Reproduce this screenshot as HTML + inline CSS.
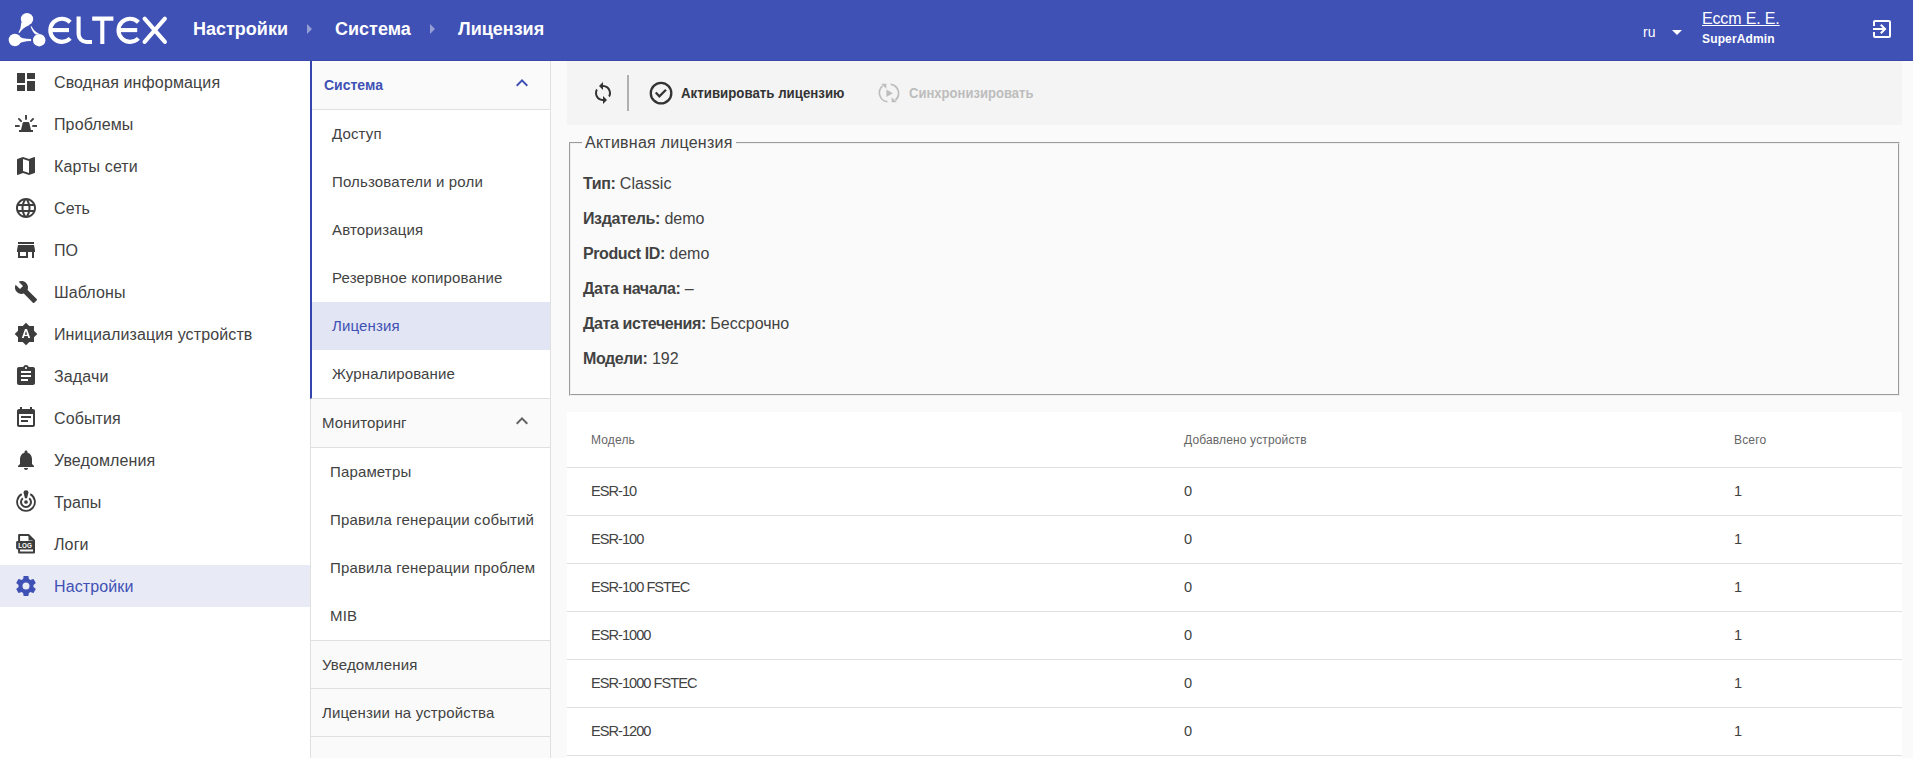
<!DOCTYPE html>
<html><head><meta charset="utf-8">
<style>
*{box-sizing:border-box;margin:0;padding:0}
html,body{width:1913px;height:758px;overflow:hidden;background:#fafafa;font-family:"Liberation Sans",sans-serif;color:#424242}
.abs{position:absolute}
#hdr{position:absolute;left:0;top:0;width:1913px;height:61px;background:#3f51b5;border-bottom:1px solid #3949ab;color:#fff}
.crumb{position:absolute;top:19px;font-size:18px;font-weight:700;line-height:20px;white-space:nowrap;transform-origin:0 0}
.carr{position:absolute;top:23.5px;width:0;height:0;border-top:5px solid transparent;border-bottom:5px solid transparent;border-left:5px solid rgba(255,255,255,.45)}
#nav{position:absolute;left:0;top:61px;width:310px;height:697px;background:#fff}
.ni{position:absolute;left:0;width:310px;height:42px}
.ni svg{position:absolute;left:14px;top:9px;width:24px;height:24px;fill:#3d3d3d}
.ni span{position:absolute;left:54px;top:13px;font-size:16px;line-height:18px;white-space:nowrap;color:#424242;letter-spacing:0.12px}
.ni.sel{background:#e8eaf6}
.ni.sel svg{fill:#3f51b5}
.ni.sel span{color:#3f51b5}
#col2{position:absolute;left:310px;top:61px;width:241px;height:697px;background:#fafafa;border-left:1px solid #e0e0e0;border-right:1px solid #e0e0e0}
#sysp{position:absolute;left:-1px;top:0;width:240px;height:338px;border-left:2px solid #3445ad;border-bottom:1px solid #e0e0e0;background:#fff}
.ph{position:absolute;left:0;width:239px;height:49px;background:#fafafa;border-bottom:1px solid #e0e0e0}
#sysp .ph,#sysp .pi{width:238px}
.ph span{position:absolute;left:11px;top:15px;font-size:15px;line-height:18px;white-space:nowrap;color:#424242;letter-spacing:0.15px}
.ph.sys span{left:12px;font-size:14px;font-weight:700;color:#3f51b5;top:15px;letter-spacing:0}
.chev{position:absolute;left:199px;top:9.5px;width:24px;height:24px;fill:#616161}
.ph.sys .chev{fill:#3f51b5;left:197.7px;top:9.8px}
.pi{position:absolute;left:0;width:239px;height:48px;background:#fff}
.pi span{position:absolute;left:19px;top:15px;font-size:15px;line-height:18px;white-space:nowrap;color:#424242;letter-spacing:0.15px}
#sysp .pi span{left:20px}
.pi.sel{background:#e2e5f3}
.pi.sel span{color:#3f51b5}
#main{position:absolute;left:551px;top:61px;width:1362px;height:697px;background:#fafafa}
#tb{position:absolute;left:16px;top:0;width:1335px;height:64px;background:#f4f4f4}
.tbt{position:absolute;top:22.5px;font-size:15px;line-height:17px;font-weight:700;white-space:nowrap;transform-origin:0 0}
fieldset{position:absolute;left:18px;top:73px;width:1331px;height:262px;padding:0 14px;margin:0}
legend{font-size:16px;padding:0 3px 0 3px;line-height:18px;color:#424242;margin-left:-3px;letter-spacing:0.25px}
.fr{position:absolute;left:12px;font-size:16px;line-height:18px;white-space:nowrap;color:#424242}
.fr b{font-weight:700;letter-spacing:-0.4px}
#tbl{position:absolute;left:16px;top:351px;width:1335px;height:346px;background:#fff}
.th{position:absolute;font-size:12px;line-height:14px;color:#666;white-space:nowrap;top:21px;letter-spacing:0.15px}
.tr{position:absolute;left:0;width:1335px;height:48px;border-top:1px solid #e0e0e0}
.tr span{position:absolute;top:15px;font-size:14.6px;line-height:16px;white-space:nowrap;color:#424242;letter-spacing:-0.98px}
</style></head><body>
<div id="hdr"><svg class="abs" style="left:0;top:0" width="180" height="60" viewBox="0 0 180 60">
<g fill="#fff">
<circle cx="27" cy="19.1" r="6.2"/><circle cx="14.9" cy="40" r="6.2"/><circle cx="39.2" cy="40.2" r="6.2"/>
<path d="M21.3 22.3 Q21.2 28 18.5 32.6 L19.5 33.1 Q22.8 27.8 29.6 25.1 Z"/>
<path d="M18.5 36.2 Q21.5 38.6 31.1 39 L31.1 41.1 Q21.5 41.5 18.5 44 Z"/>
<path d="M35.8 34.6 Q33 33.3 30.6 26.6 L31.6 26.2 Q34 31.5 39.5 33.9 Z"/>
</g>
<g fill="none" stroke="#fff" stroke-width="4.1">
<path d="M70.2 22.2A11.6 11.6 0 1 0 70.2 38.4"/><path d="M51.5 30.1H69"/>
<path d="M78.6 16.6V34A8 8 0 0 0 86.6 42H92"/>
<path d="M92.2 18.6H113.4M102.3 18.6V44"/>
<path d="M138.4 22.2A11.6 11.6 0 1 0 138.4 38.4"/><path d="M119.7 30.1H137.2"/>
<path d="M144.6 18.7L164.9 41.9M164.9 18.7L144.6 41.9" stroke-linecap="round"/>
</g></svg>
<span class="crumb" style="left:193px">Настройки</span><span class="carr" style="left:307px"></span>
<span class="crumb" style="left:335px">Система</span><span class="carr" style="left:430px"></span>
<span class="crumb" style="left:458px">Лицензия</span>
<span class="abs" style="left:1643px;top:23.5px;font-size:14px;line-height:16px">ru</span>
<span class="abs" style="left:1672px;top:30px;width:0;height:0;border-left:5px solid transparent;border-right:5px solid transparent;border-top:5px solid #fff"></span>
<span class="abs" style="left:1702px;top:10px;font-size:16px;line-height:18px;text-decoration:underline;letter-spacing:-0.15px">Eccm E. E.</span>
<span class="abs" style="left:1702px;top:32px;font-size:12px;line-height:14px;font-weight:700;letter-spacing:0.15px">SuperAdmin</span>
<svg class="abs" style="left:1870px;top:17px" width="24" height="24" viewBox="0 0 24 24" fill="#fff"><path d="M19,3H5C3.89,3 3,3.89 3,5V9H5V5H19V19H5V15H3V19A2,2 0 0,0 5,21H19A2,2 0 0,0 21,19V5C21,3.89 20.1,3 19,3M10.08,15.58L11.5,17L16.5,12L11.5,7L10.08,8.41L12.67,11H3V13H12.67L10.08,15.58Z"/></svg>
</div>
<div id="nav"><div class="ni" style="top:0px"><svg viewBox="0 0 24 24"><path d="M3 13h8V3H3v10zm0 8h8v-6H3v6zm10 0h8V11h-8v10zm0-18v6h8V3h-8z"/></svg><span>Сводная информация</span></div><div class="ni" style="top:42px"><svg viewBox="0 0 24 24"><rect x="5" y="18" width="14" height="2"/><path d="M7 18L8.6 11.2Q8.9 10 10.1 10H13.9Q15.1 10 15.4 11.2L17 18Z"/><rect x="11.05" y="3" width="1.9" height="4.7"/><rect x="1" y="13.05" width="4.7" height="1.9"/><rect x="18.3" y="13.05" width="4.7" height="1.9"/><path d="M4.9 6.9L7.1 9.1M19.1 6.9L16.9 9.1" stroke="#3d3d3d" stroke-width="1.9" stroke-linecap="round"/></svg><span>Проблемы</span></div><div class="ni" style="top:84px"><svg viewBox="0 0 24 24"><path d="M20.5 3l-.16.03L15 5.1 9 3 3.36 4.9c-.21.07-.36.25-.36.48V20.5c0 .28.22.5.5.5l.16-.03L9 18.9l6 2.1 5.64-1.9c.21-.07.36-.25.36-.48V3.5c0-.28-.22-.5-.5-.5zM15 19l-6-2.11V5l6 2.11V19z"/></svg><span>Карты сети</span></div><div class="ni" style="top:126px"><svg viewBox="0 0 24 24"><path d="M11.99 2C6.47 2 2 6.48 2 12s4.47 10 9.99 10C17.52 22 22 17.52 22 12S17.52 2 11.99 2zm6.93 6h-2.95c-.32-1.25-.78-2.450-1.38-3.56 1.84.63 3.37 1.91 4.33 3.56zM12 4.04c.83 1.2 1.48 2.53 1.91 3.96h-3.82c.43-1.43 1.08-2.76 1.910-3.96zM4.26 14C4.1 13.36 4 12.69 4 12s.1-1.36.26-2h3.38c-.08.66-.14 1.32-.14 2 0 .68.06 1.34.14 2H4.26zm.82 2h2.95c.32 1.25.78 2.45 1.38 3.56-1.84-.63-3.37-1.9-4.33-3.56zm2.95-8H5.08c.96-1.66 2.49-2.93 4.33-3.56C8.81 5.55 8.35 6.75 8.03 8zM12 19.96c-.83-1.2-1.48-2.53-1.91-3.96h3.82c-.43 1.43-1.08 2.76-1.91 3.96zM14.34 14H9.66c-.09-.66-.16-1.32-.16-2 0-.68.07-1.35.16-2h4.68c.09.65.16 1.32.16 2 0 .68-.07 1.34-.16 2zm.25 5.56c.6-1.11 1.06-2.31 1.38-3.56h2.95c-.96 1.65-2.49 2.93-4.33 3.56zM16.36 14c.08-.66.14-1.32.14-2 0-.68-.06-1.34-.14-2h3.38c.16.64.26 1.31.26 2s-.1 1.36-.26 2h-3.38z"/></svg><span>Сеть</span></div><div class="ni" style="top:168px"><svg viewBox="0 0 24 24"><path d="M20 4H4v2h16V4zm1 10v-2l-1-5H4l-1 5v2h1v6h10v-6h4v6h2v-6h1zm-9 4H6v-4h6v4z"/></svg><span>ПО</span></div><div class="ni" style="top:210px"><svg viewBox="0 0 24 24"><path d="M22.7 19l-9.1-9.1c.9-2.3.4-5-1.5-6.9-2-2-5-2.4-7.4-1.3L9 6 6 9 1.6 4.7C.4 7.1.9 10.1 2.9 12.1c1.9 1.9 4.6 2.4 6.9 1.5l9.1 9.1c.4.4 1 .4 1.4 0l2.3-2.3c.5-.4.5-1.1.1-1.4z"/></svg><span>Шаблоны</span></div><div class="ni" style="top:252px"><svg viewBox="0 0 24 24"><path d="M10.85 12.65h2.3L12 9l-1.15 3.65zM20 8.69V4h-4.69L12 .69 8.69 4H4v4.69L.69 12 4 15.31V20h4.69L12 23.31 15.31 20H20v-4.69L23.31 12 20 8.69zM14.3 16l-.7-2h-3.2l-.7 2H7.8L11 7h2l3.2 9h-1.9z"/></svg><span>Инициализация устройств</span></div><div class="ni" style="top:294px"><svg viewBox="0 0 24 24"><path d="M19 3h-4.18C14.4 1.840 13.3 1 12 1c-1.3 0-2.4.84-2.82 2H5c-1.1 0-2 .9-2 2v14c0 1.1.9 2 2 2h14c1.1 0 2-.9 2-2V5c0-1.1-.9-2-2-2zm-7 0c.55 0 1 .45 1 1s-.45 1-1 1-1-.45-1-1 .45-1 1-1zm2 14H7v-2h7v2zm3-4H7v-2h10v2zm0-4H7V7h10v2z"/></svg><span>Задачи</span></div><div class="ni" style="top:336px"><svg viewBox="0 0 24 24"><path d="M17 10H7v2h10v-2zm2-7h-1V1h-2v2H8V1H6v2H5c-1.11 0-1.99.9-1.99 2L3 19c0 1.1.89 2 2 2h14c1.1 0 2-.9 2-2V5c0-1.1-.9-2-2-2zm0 16H5V8h14v11zm-5-5H7v2h7v-2z"/></svg><span>События</span></div><div class="ni" style="top:378px"><svg viewBox="0 0 24 24"><path d="M12 22c1.1 0 2-.9 2-2h-4c0 1.1.89 2 2 2zm6-6v-5c0-3.07-1.64-5.64-4.5-6.32V4c0-.83-.67-1.5-1.5-1.5s-1.5.67-1.5 1.5v.68C7.63 5.36 6 7.92 6 11v5l-2 2v1h16v-1l-2-2z"/></svg><span>Уведомления</span></div><div class="ni" style="top:420px"><svg viewBox="0 0 24 24"><g fill="none" stroke="#3d3d3d"><path d="M16.25 4.18A8.9 8.9 0 1 1 7.75 4.18" stroke-width="1.85"/><path d="M15.21 8.17A5 5 0 1 1 8.79 8.17" stroke-width="2"/></g><circle cx="12" cy="12" r="1.85"/><path d="M9.5 2.5Q9.5 0.2 12 0.2Q14.5 0.2 14.5 2.5L13.1 8Q12 8.9 10.9 8Z"/></svg><span>Трапы</span></div><div class="ni" style="top:462px"><svg viewBox="0 0 24 24"><path d="M5.1 3H14.5L20 8.5V20.6H5.1Z" fill="none" stroke="#3d3d3d" stroke-width="2" stroke-linejoin="round"/><path d="M14.5 3V8.5H20Z"/><rect x="2.1" y="9.1" width="18.4" height="8.3" rx="1.3"/><text x="11.1" y="15.9" font-size="6.3" font-weight="700" text-anchor="middle" fill="#fff" font-family="Liberation Sans">LOG</text></svg><span>Логи</span></div><div class="ni sel" style="top:504px"><svg viewBox="0 0 24 24"><path d="M12,15.5A3.5,3.5 0 0,1 8.5,12A3.5,3.5 0 0,1 12,8.5A3.5,3.5 0 0,1 15.5,12A3.5,3.5 0 0,1 12,15.5M19.43,12.97C19.47,12.65 19.5,12.33 19.5,12C19.5,11.67 19.47,11.34 19.43,11L21.54,9.37C21.73,9.22 21.78,8.95 21.66,8.73L19.66,5.27C19.54,5.05 19.27,4.96 19.05,5.05L16.56,6.05C16.04,5.66 15.5,5.32 14.87,5.07L14.5,2.42C14.46,2.18 14.25,2 14,2H10C9.75,2 9.54,2.180 9.5,2.42L9.13,5.07C8.5,5.32 7.96,5.66 7.44,6.05L4.95,5.05C4.73,4.96 4.46,5.05 4.34,5.27L2.34,8.73C2.21,8.95 2.27,9.22 2.46,9.37L4.57,11C4.53,11.34 4.5,11.67 4.5,12C4.5,12.33 4.53,12.65 4.57,12.97L2.46,14.63C2.27,14.78 2.21,15.05 2.34,15.27L4.34,18.73C4.46,18.95 4.73,19.03 4.95,18.95L7.44,17.94C7.96,18.34 8.5,18.68 9.13,18.93L9.5,21.58C9.54,21.82 9.75,22 10,22H14C14.25,22 14.46,21.82 14.5,21.58L14.87,18.93C15.5,18.67 16.04,18.34 16.56,17.94L19.05,18.95C19.27,19.03 19.54,18.95 19.66,18.73L21.66,15.27C21.78,15.05 21.73,14.78 21.54,14.63L19.43,12.97Z"/></svg><span>Настройки</span></div></div>
<div id="col2"><div id="sysp"><div class="ph sys" style="top:0"><span>Система</span><svg class="chev" viewBox="0 0 24 24"><path d="M7.41 15.41L12 10.83l4.59 4.58L18 14l-6-6-6 6z"/></svg></div><div class="pi" style="top:49px"><span>Доступ</span></div><div class="pi" style="top:97px"><span>Пользователи и роли</span></div><div class="pi" style="top:145px"><span>Авторизация</span></div><div class="pi" style="top:193px"><span>Резервное копирование</span></div><div class="pi sel" style="top:241px"><span>Лицензия</span></div><div class="pi" style="top:289px"><span>Журналирование</span></div></div><div class="ph" style="top:338px"><span>Мониторинг</span><svg class="chev" viewBox="0 0 24 24"><path d="M7.41 15.41L12 10.83l4.59 4.58L18 14l-6-6-6 6z"/></svg></div><div class="pi" style="top:387px"><span>Параметры</span></div><div class="pi" style="top:435px"><span>Правила генерации событий</span></div><div class="pi" style="top:483px"><span>Правила генерации проблем</span></div><div class="pi" style="top:531px"><span>MIB</span></div><div class="ph" style="top:579px;border-top:1px solid #e0e0e0"><span>Уведомления</span></div><div class="ph" style="top:628px;height:48px"><span>Лицензии на устройства</span></div><div class="ph" style="top:676px"></div></div>
<div id="main">
<div id="tb">
<svg class="abs" style="left:24px;top:20px;fill:#333" width="24" height="24" viewBox="0 0 24 24"><path d="M12 4V1L8 5l4 4V6c3.31 0 6 2.69 6 6 0 1.01-.25 1.97-.7 2.8l1.46 1.46C19.54 15.03 20 13.57 20 12c0-4.42-3.58-8-8-8zm0 14c-3.31 0-6-2.69-6-6 0-1.01.25-1.97.7-2.8L5.24 7.74C4.46 8.97 4 10.43 4 12c0 4.42 3.58 8 8 8v3l4-4-4-4v3z"/></svg>
<div class="abs" style="left:60px;top:14px;width:2px;height:36px;background:#b0b0b0"></div>
<svg class="abs" style="left:80px;top:18px" width="29" height="28" viewBox="0 0 29 28" fill="none" stroke="#333"><circle cx="14.05" cy="14.15" r="10.25" stroke-width="2.3"/><path d="M8.75 13.6L12.37 17.36L19 10.7" stroke-width="2.2"/></svg>
<span class="tbt" style="left:114px;color:#333;transform:scaleX(0.885)">Активировать лицензию</span>
<svg class="abs" style="left:310px;top:19.6px" width="24" height="24" viewBox="0 0 24 24"><g fill="none" stroke="#bdbdbd" stroke-width="1.7"><path d="M10.4 20.7A9 9 0 0 1 5.6 4.9"/><path d="M13.6 3.3A9 9 0 0 1 18.4 19.1"/></g><g fill="#bdbdbd"><path d="M4.2 2.7h5.1v5.1z"/><path d="M19.8 21.3h-5.1v-5.1z"/><path d="M9.4 8.5v7.4l6.5-3.7z"/></g></svg>
<span class="tbt" style="left:342px;color:#bdbdbd;transform:scaleX(0.87)">Синхронизировать</span>
</div>
<fieldset><legend>Активная лицензия</legend><div class="fr" style="top:23px"><b>Тип:</b> Classic</div><div class="fr" style="top:58px"><b>Издатель:</b> demo</div><div class="fr" style="top:93px"><b>Product ID:</b> demo</div><div class="fr" style="top:128px"><b>Дата начала:</b> –</div><div class="fr" style="top:163px"><b>Дата истечения:</b> Бессрочно</div><div class="fr" style="top:198px"><b>Модели:</b> 192</div></fieldset>
<div id="tbl"><span class="th" style="left:24px">Модель</span><span class="th" style="left:617px">Добавлено устройств</span><span class="th" style="left:1167px">Всего</span><div class="tr" style="top:55px"><span class="m" style="left:24px">ESR-10</span><span class="m" style="left:617px">0</span><span class="m" style="left:1167px">1</span></div><div class="tr" style="top:103px"><span class="m" style="left:24px">ESR-100</span><span class="m" style="left:617px">0</span><span class="m" style="left:1167px">1</span></div><div class="tr" style="top:151px"><span class="m" style="left:24px">ESR-100 FSTEC</span><span class="m" style="left:617px">0</span><span class="m" style="left:1167px">1</span></div><div class="tr" style="top:199px"><span class="m" style="left:24px">ESR-1000</span><span class="m" style="left:617px">0</span><span class="m" style="left:1167px">1</span></div><div class="tr" style="top:247px"><span class="m" style="left:24px">ESR-1000 FSTEC</span><span class="m" style="left:617px">0</span><span class="m" style="left:1167px">1</span></div><div class="tr" style="top:295px"><span class="m" style="left:24px">ESR-1200</span><span class="m" style="left:617px">0</span><span class="m" style="left:1167px">1</span></div><div class="tr" style="top:343px"></div></div>
</div>
</body></html>
